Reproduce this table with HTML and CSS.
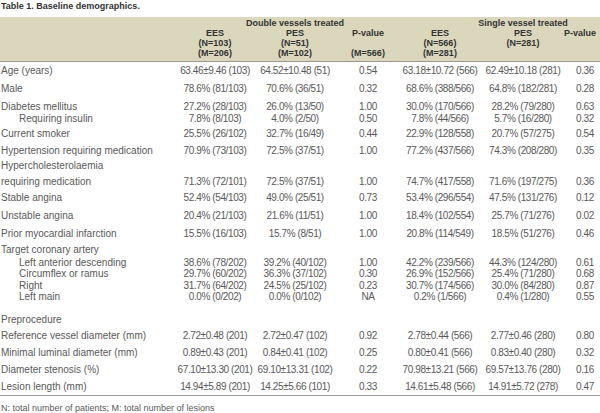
FILE: index.html
```html
<!DOCTYPE html>
<html>
<head>
<meta charset="utf-8">
<link rel="stylesheet" href="styles.css">
</head>
<body>
<div class="page">
  <div class="title">Table 1. Baseline demographics.</div>
  <div class="thead">
    <div class="hrow">
      <div class="h lab"></div>
      <div class="h"></div>
      <div class="h"><span>Double vessels treated</span></div>
      <div class="h"></div>
      <div class="h"></div>
      <div class="h"><span>Single vessel treated</span></div>
      <div class="h"></div>
    </div>
    <div class="hrow">
      <div class="h lab"></div>
      <div class="h"><span>EES<br>(N=103)<br>(M=206)</span></div>
      <div class="h"><span>PES<br>(N=51)<br>(M=102)</span></div>
      <div class="h"><span>P-value<br>&nbsp;<br>(M=566)</span></div>
      <div class="h"><span>EES<br>(N=566)<br>(M=281)</span></div>
      <div class="h"><span>PES<br>(N=281)<br>&nbsp;</span></div>
      <div class="h hlast"><span>P-value<br>&nbsp;<br>&nbsp;</span></div>
    </div>
  </div>
  <div class="tbody">
    <div class="row pt3"><div class="lab">Age (years)</div><div class="v"><span>63.46±9.46 (103)</span></div><div class="v"><span>64.52±10.48 (51)</span></div><div class="v"><span>0.54</span></div><div class="v"><span>63.18±10.72 (566)</span></div><div class="v"><span>62.49±10.18 (281)</span></div><div class="v"><span>0.36</span></div></div>
    <div class="row pt6"><div class="lab">Male</div><div class="v"><span>78.6% (81/103)</span></div><div class="v"><span>70.6% (36/51)</span></div><div class="v"><span>0.32</span></div><div class="v"><span>68.6% (388/566)</span></div><div class="v"><span>64.8% (182/281)</span></div><div class="v"><span>0.28</span></div></div>
    <div class="row pt6"><div class="lab">Diabetes mellitus</div><div class="v"><span>27.2% (28/103)</span></div><div class="v"><span>26.0% (13/50)</span></div><div class="v"><span>1.00</span></div><div class="v"><span>30.0% (170/566)</span></div><div class="v"><span>28.2% (79/280)</span></div><div class="v"><span>0.63</span></div></div>
    <div class="row sub"><div class="lab">Requiring insulin</div><div class="v"><span>7.8% (8/103)</span></div><div class="v"><span>4.0% (2/50)</span></div><div class="v"><span>0.50</span></div><div class="v"><span>7.8% (44/566)</span></div><div class="v"><span>5.7% (16/280)</span></div><div class="v"><span>0.32</span></div></div>
    <div class="row pt3"><div class="lab">Current smoker</div><div class="v"><span>25.5% (26/102)</span></div><div class="v"><span>32.7% (16/49)</span></div><div class="v"><span>0.44</span></div><div class="v"><span>22.9% (128/558)</span></div><div class="v"><span>20.7% (57/275)</span></div><div class="v"><span>0.54</span></div></div>
    <div class="row pt5"><div class="lab">Hypertension requiring medication</div><div class="v"><span>70.9% (73/103)</span></div><div class="v"><span>72.5% (37/51)</span></div><div class="v"><span>1.00</span></div><div class="v"><span>77.2% (437/566)</span></div><div class="v"><span>74.3% (208/280)</span></div><div class="v"><span>0.35</span></div></div>
    <div class="row two"><div class="lab">Hypercholesterolaemia<br>requiring medication</div><div class="v"><span>71.3% (72/101)</span></div><div class="v"><span>72.5% (37/51)</span></div><div class="v"><span>1.00</span></div><div class="v"><span>74.7% (417/558)</span></div><div class="v"><span>71.6% (197/275)</span></div><div class="v"><span>0.36</span></div></div>
    <div class="row pt2"><div class="lab">Stable angina</div><div class="v"><span>52.4% (54/103)</span></div><div class="v"><span>49.0% (25/51)</span></div><div class="v"><span>0.73</span></div><div class="v"><span>53.4% (296/554)</span></div><div class="v"><span>47.5% (131/276)</span></div><div class="v"><span>0.12</span></div></div>
    <div class="row pt6"><div class="lab">Unstable angina</div><div class="v"><span>20.4% (21/103)</span></div><div class="v"><span>21.6% (11/51)</span></div><div class="v"><span>1.00</span></div><div class="v"><span>18.4% (102/554)</span></div><div class="v"><span>25.7% (71/276)</span></div><div class="v"><span>0.02</span></div></div>
    <div class="row pt6"><div class="lab">Prior myocardial infarction</div><div class="v"><span>15.5% (16/103)</span></div><div class="v"><span>15.7% (8/51)</span></div><div class="v"><span>1.00</span></div><div class="v"><span>20.8% (114/549)</span></div><div class="v"><span>18.5% (51/276)</span></div><div class="v"><span>0.46</span></div></div>
    <div class="row pt4"><div class="lab">Target coronary artery</div></div>
    <div class="row sub pt1"><div class="lab">Left anterior descending</div><div class="v"><span>38.6% (78/202)</span></div><div class="v"><span>39.2% (40/102)</span></div><div class="v"><span>1.00</span></div><div class="v"><span>42.2% (239/566)</span></div><div class="v"><span>44.3% (124/280)</span></div><div class="v"><span>0.61</span></div></div>
    <div class="row sub"><div class="lab">Circumflex or ramus</div><div class="v"><span>29.7% (60/202)</span></div><div class="v"><span>36.3% (37/102)</span></div><div class="v"><span>0.30</span></div><div class="v"><span>26.9% (152/566)</span></div><div class="v"><span>25.4% (71/280)</span></div><div class="v"><span>0.68</span></div></div>
    <div class="row sub"><div class="lab">Right</div><div class="v"><span>31.7% (64/202)</span></div><div class="v"><span>24.5% (25/102)</span></div><div class="v"><span>0.23</span></div><div class="v"><span>30.7% (174/566)</span></div><div class="v"><span>30.0% (84/280)</span></div><div class="v"><span>0.87</span></div></div>
    <div class="row sub"><div class="lab">Left main</div><div class="v"><span>0.0% (0/202)</span></div><div class="v"><span>0.0% (0/102)</span></div><div class="v"><span>NA</span></div><div class="v"><span>0.2% (1/566)</span></div><div class="v"><span>0.4% (1/280)</span></div><div class="v"><span>0.55</span></div></div>
    <div class="row pt11"><div class="lab">Preprocedure</div></div>
    <div class="row pt4"><div class="lab">Reference vessel diameter (mm)</div><div class="v"><span>2.72±0.48 (201)</span></div><div class="v"><span>2.72±0.47 (102)</span></div><div class="v"><span>0.92</span></div><div class="v"><span>2.78±0.44 (566)</span></div><div class="v"><span>2.77±0.46 (280)</span></div><div class="v"><span>0.80</span></div></div>
    <div class="row pt5"><div class="lab">Minimal luminal diameter (mm)</div><div class="v"><span>0.89±0.43 (201)</span></div><div class="v"><span>0.84±0.41 (102)</span></div><div class="v"><span>0.25</span></div><div class="v"><span>0.80±0.41 (566)</span></div><div class="v"><span>0.83±0.40 (280)</span></div><div class="v"><span>0.32</span></div></div>
    <div class="row pt5"><div class="lab">Diameter stenosis (%)</div><div class="v"><span>67.10±13.30 (201)</span></div><div class="v"><span>69.10±13.31 (102)</span></div><div class="v"><span>0.22</span></div><div class="v"><span>70.98±13.21 (566)</span></div><div class="v"><span>69.57±13.76 (280)</span></div><div class="v"><span>0.16</span></div></div>
    <div class="row pt5"><div class="lab">Lesion length (mm)</div><div class="v"><span>14.94±5.89 (201)</span></div><div class="v"><span>14.25±5.66 (101)</span></div><div class="v"><span>0.33</span></div><div class="v"><span>14.61±5.48 (566)</span></div><div class="v"><span>14.91±5.72 (278)</span></div><div class="v"><span>0.47</span></div></div>
  </div>
  <div class="foot">N: total number of patients; M: total number of lesions</div>
</div>
</body>
</html>
```
FILE: styles.css
```css
html, body {
  margin: 0;
  padding: 0;
  background: #ffffff;
}
body {
  width: 600px;
  height: 413px;
  overflow: hidden;
  font-family: "Liberation Sans", Arial, sans-serif;
  color: #595959;
}
.page {
  width: 600px;
}
.title {
  font-weight: bold;
  font-size: 9px;
  line-height: 12px;
  color: #333333;
  padding-left: 1px;
  height: 17px;
}
.thead {
  background: #dad7bd;
  border-bottom: 1px solid #9a9a9a;
  padding: 1px 0 3px;
  font-weight: bold;
  font-size: 9px;
  line-height: 10px;
  color: #333333;
}
.hrow,
.row {
  display: grid;
  grid-template-columns: 175px 80px 80px 66px 78px 88px 36px;
  width: 600px;
}
.h,
.v {
  display: flex;
  justify-content: center;
  white-space: nowrap;
  min-width: 0;
  text-align: center;
}
.h.hlast {
  padding-right: 10px;
}
.v {
  font-size: 10px;
  letter-spacing: -0.4px;
}
.tbody {
  font-size: 10px;
  line-height: 12px;
  border-bottom: 1px solid #9a9a9a;
  padding-bottom: 2px;
}
.row .lab {
  padding-left: 1px;
  white-space: nowrap;
}
.row.sub {
  line-height: 11.5px;
}
.row.sub .lab {
  padding-left: 19px;
}
.pt1 { padding-top: 1px; }
.pt2 { padding-top: 2px; }
.pt3 { padding-top: 3px; }
.pt4 { padding-top: 4px; }
.pt5 { padding-top: 5px; }
.pt6 { padding-top: 6px; }
.pt11 { padding-top: 11px; }
.row.two {
  padding-top: 1px;
}
.row.two .lab {
  line-height: 16px;
}
.row.two .v {
  padding-top: 18px;
}
.foot {
  font-size: 9px;
  line-height: 12px;
  padding: 6px 0 0 1px;
}
```
